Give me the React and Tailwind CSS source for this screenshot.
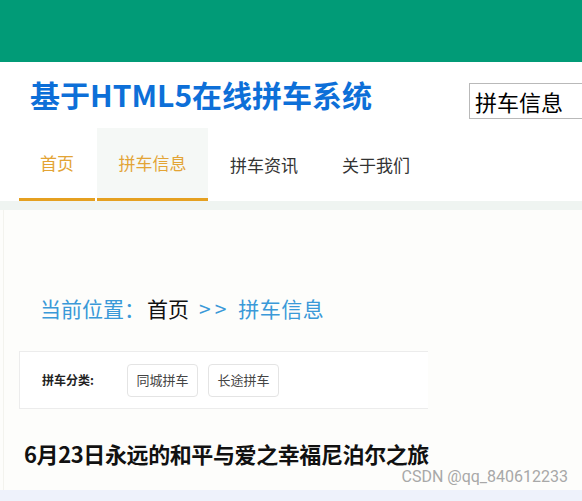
export default function App() {
  const navItems = ['首页', '拼车信息', '拼车资讯', '关于我们'];

  return (
    <div
      className="w-[582px] h-[501px] overflow-hidden bg-[#fdfdfb] flex flex-col"
      style={{ fontFamily: '"Noto Sans CJK SC", "Noto Sans", sans-serif' }}
    >
      {/* Top band */}
      <div className="h-[62px] shrink-0 bg-[#019b77]" />

      {/* Header */}
      <div className="h-[66px] shrink-0 bg-white flex items-center justify-between pl-[30px]">
        <h1 className="text-[30px] font-bold leading-none text-[#0d6fd8] -mt-[3px]">
          基于HTML5在线拼车系统
        </h1>
        <div className="w-[125px] h-[36px] border border-[#b9b9b9] bg-white flex items-center pl-[5px] -mr-[12px] mt-[12px]">
          <span className="text-[22px] leading-none text-black">拼车信息</span>
        </div>
      </div>

      {/* Nav */}
      <div className="h-[73px] shrink-0 bg-white flex items-stretch pl-[19px]">
        <div className="w-[76px] flex items-center justify-center text-[17px] text-[#e3a435] border-b-[3px] border-[#e5a020]">
          {navItems[0]}
        </div>
        <div className="w-[2px]" />
        <div className="w-[111px] flex items-center justify-center text-[17px] text-[#e3a435] bg-[#f5f8f6] border-b-[3px] border-[#e5a020]">
          {navItems[1]}
        </div>
        <div className="w-[112px] flex items-center justify-center text-[17px] text-[#333]">
          {navItems[2]}
        </div>
        <div className="w-[112px] flex items-center justify-center text-[17px] text-[#333]">
          {navItems[3]}
        </div>
      </div>
      <div className="h-[9px] shrink-0 bg-[#eff4f1]" />

      {/* Content */}
      <div className="flex-1 flex flex-col pl-[20px] ml-[3px] border-l border-[#f3f3ee]">
        <div className="mt-[88px] pl-[16px] text-[21px] leading-none text-[#3a99d8] flex items-center">
          <span>当前位置：</span>
          <span className="text-[#111] ml-[2px]">首页</span>
          <span className="ml-[10px] mr-[8px] tracking-[4px]">&gt;&gt;</span>
          <span className="tracking-[0.5px]">拼车信息</span>
        </div>

        <div className="mt-[32px] -ml-[5px] w-[409px] h-[58px] bg-white border border-[#ececec] border-r-0 flex items-center pl-[22px]">
          <span className="text-[12px] font-bold text-[#222] mr-[33px]">拼车分类:</span>
          <div className="flex gap-[10px]">
            <div className="w-[71px] h-[33px] rounded-[4px] border border-[#e4e4e4] bg-white flex items-center justify-center text-[13px] text-[#444]">
              同城拼车
            </div>
            <div className="w-[71px] h-[33px] rounded-[4px] border border-[#e4e4e4] bg-white flex items-center justify-center text-[13px] text-[#444]">
              长途拼车
            </div>
          </div>
        </div>

        <div className="mt-[33px] text-[22px] font-bold leading-none text-[#111] tracking-[-0.4px]">
          6月23日永远的和平与爱之幸福尼泊尔之旅
        </div>

        <div className="mt-auto flex justify-end pr-[14px] pb-[5px]">
          <span
            className="text-[16px] leading-none text-[#a8a8a8]"
            style={{ fontFamily: 'Roboto, "Liberation Sans", sans-serif' }}
          >
            CSDN @qq_840612233
          </span>
        </div>
      </div>
      <div className="h-[11px] shrink-0 bg-[#eef2fb]" />
    </div>
  );
}
